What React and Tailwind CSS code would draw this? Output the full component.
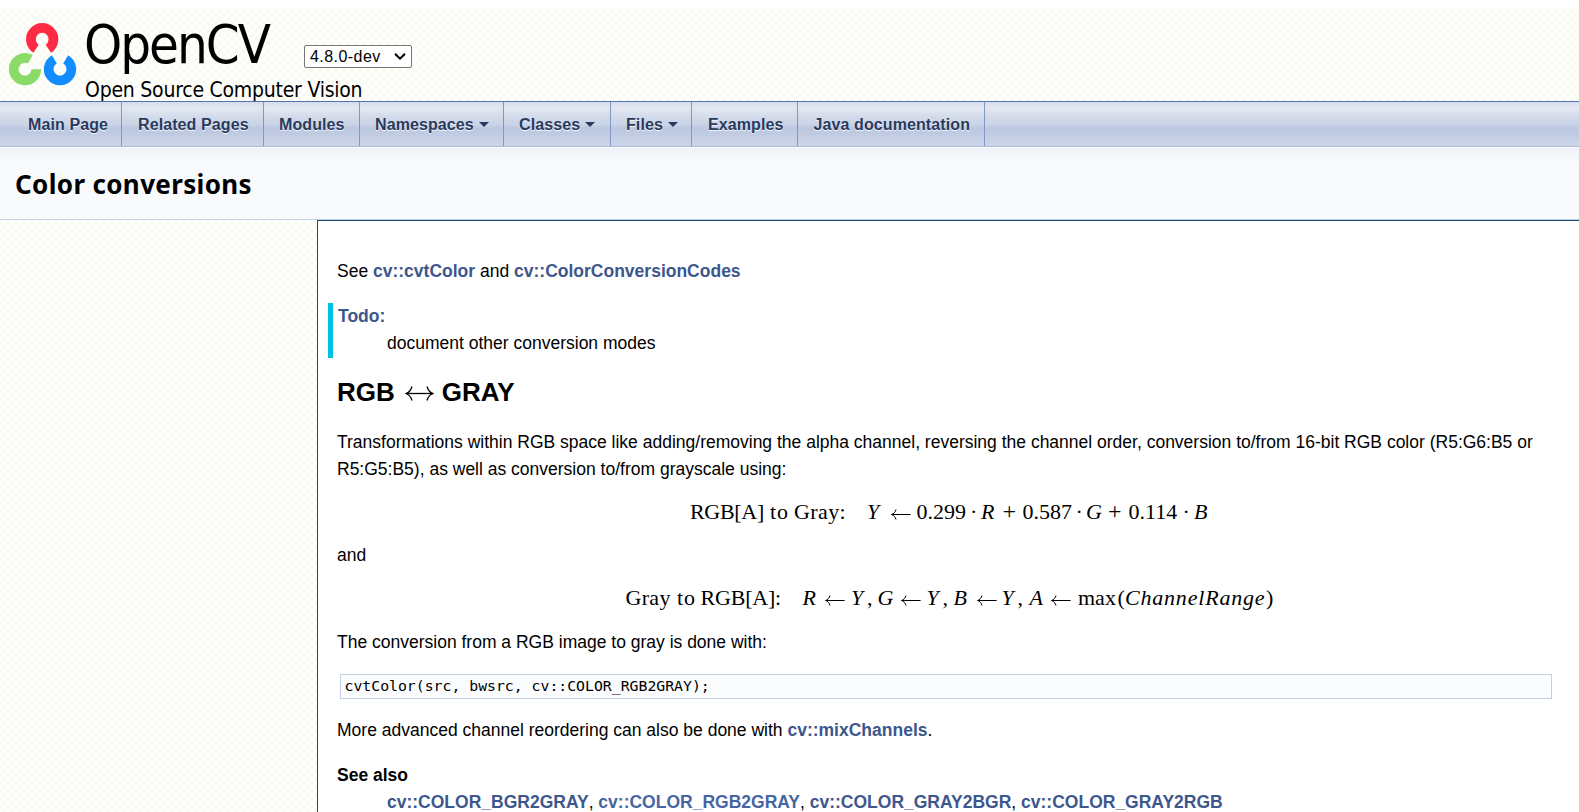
import React from 'react';

const NAV = [
  { label: 'Main Page', box: 'w-[122px] pl-7' },
  { label: 'Related Pages', box: 'w-[142px] pl-4' },
  { label: 'Modules', box: 'w-[96px] pl-[15px]' },
  { label: 'Namespaces', box: 'w-[144px] pl-[15px]', caret: true },
  { label: 'Classes', box: 'w-[107px] pl-[15px]', caret: true },
  { label: 'Files', box: 'w-[81px] pl-[15px]', caret: true },
  { label: 'Examples', box: 'w-[106px] pl-4' },
  { label: 'Java documentation', box: 'w-[187px] pl-[15.5px]' },
];

function Logo() {
  return (
    <svg className="block h-[64px] w-[68px]" viewBox="0 0 68 64" fill="none" strokeWidth="9.7">
      <path d="M27.05 25.7 A11.3 11.3 0 1 1 39.35 25.7" stroke="#ff2a44" />
      <path d="M21.3 36.2 A11.3 11.3 0 1 0 27.3 46.2" stroke="#8cdb68" />
      <path d="M45.35 36.4 A11.3 11.3 0 1 0 56.65 36.4" stroke="#128dff" />
    </svg>
  );
}

function Arrow({ box }) {
  return (
    <span className={`inline-block shrink-0 ${box}`}>
      <svg className="inline-block h-3 w-5 align-[-1px]" viewBox="0 0 20 12" fill="none" stroke="#000">
        <path d="M0.6 6.5 H19.6" strokeWidth="1" />
        <path d="M5 1.5 C4.3 4.1 2.8 5.7 0.6 6.5 C2.8 7.3 4.3 8.9 5 11.5" strokeWidth="1" />
      </svg>
    </span>
  );
}

function T({ box, children }) {
  return <span className={`inline-block shrink-0 whitespace-pre ${box}`}>{children}</span>;
}

function Ref({ children, cls }) {
  return <a className={`font-bold ${cls || 'text-[#3d578c]'}`}>{children}</a>;
}

export default function App() {
  return (
    <div className="flex h-[812px] w-[1579px] flex-col overflow-hidden bg-white font-['Liberation_Sans',Arial,sans-serif] text-[17.5px] leading-[27px] text-black">
      <div className="h-[7px] shrink-0 bg-white" />
      <div className="flex min-h-0 flex-1 flex-col bg-[#fffffd] bg-[radial-gradient(circle,#f7f8ef_0_1px,transparent_3px),radial-gradient(circle,#f8f9f1_0_1px,transparent_3px)] bg-size-[8px_8px] bg-position-[0_0,4px_4px]">
        <header className="flex h-[94px] shrink-0 pl-[9px] pt-4">
          <Logo />
          <div className="-mt-px ml-2 flex flex-col font-['DejaVu_Sans_Condensed','DejaVu_Sans',sans-serif] [font-stretch:condensed]">
            <div className="flex h-[57px] items-start">
              <div className="-ml-px w-[220px] whitespace-nowrap text-[54px] leading-[46px] tracking-[-2px]">OpenCV</div>
              <div className="mt-[23px] flex h-[23px] w-[108px] items-center justify-between rounded-[2px] border border-[#767676] bg-white pl-[5px] pr-[5px] font-['Liberation_Sans',sans-serif] text-[16px] leading-5 tracking-[0.45px]">
                <span>4.8.0-dev</span>
                <svg className="h-[7px] w-[12px]" viewBox="0 0 12 7" fill="none" stroke="#000" strokeWidth="2">
                  <path d="M1 0.8 L6 5.6 L11 0.8" />
                </svg>
              </div>
            </div>
            <div className="whitespace-nowrap text-[21px] leading-[22px] tracking-[-0.23px]">Open Source Computer Vision</div>
          </div>
        </header>
        <nav className="flex h-[46px] shrink-0 border-y border-t-[#5373b4] border-b-[#a9b6d6] bg-[linear-gradient(180deg,#d5dcea_0,#e4e8f2_6px,#d3dbea_15px,#c9d3e7_23px,#bcc8e0_26px,#bfcae2_31px,#cdd6e9_44px)]">
          {NAV.map((n) => (
            <div
              key={n.label}
              className={`flex h-[44px] shrink-0 items-center border-r border-[#8297c6] text-[16px] font-bold text-[#283a5d] [text-shadow:0_1px_1px_rgba(255,255,255,0.9)] ${n.box}`}
            >
              <span className="whitespace-nowrap tracking-[0.1px]">{n.label}</span>
              {n.caret && (
                <svg className="ml-[5px] h-[5px] w-[10px]" viewBox="0 0 10 5">
                  <path d="M0 0 H10 L5 5 Z" fill="#283a5d" />
                </svg>
              )}
            </div>
          ))}
        </nav>
        <div className="flex h-[73px] shrink-0 items-center border-b border-t border-b-[#c4cfe5] border-t-white bg-[linear-gradient(180deg,#edf0f7_0,#f9fafc_14px)] pl-[15px] pt-[2px] font-['Noto_Sans',sans-serif] text-[26px] font-bold tracking-[0.36px]">
          <h1 className="whitespace-nowrap">Color conversions</h1>
        </div>
        <div className="flex min-h-0 flex-1">
          <aside className="w-[317px] shrink-0" />
          <main className="min-w-0 flex-1 overflow-hidden border-l border-t border-[#164b73] bg-white">
            <p className="ml-[19px] mt-[37px]">
              See <Ref>cv::cvtColor</Ref> and <Ref>cv::ColorConversionCodes</Ref>
            </p>
            <dl className="ml-[10px] mt-[18px] border-l-[5px] border-[#00c0e0] pb-px pl-[5px]">
              <dt><Ref>Todo:</Ref></dt>
              <dd className="ml-[49px]">document other conversion modes</dd>
            </dl>
            <h2 className="ml-[19px] mt-[18px] flex h-8 items-center text-[26px] font-bold">
              <span>RGB</span>
              <svg className="ml-[10px] mr-2 mt-[3px] h-[18px] w-[29px]" viewBox="0 0 29 18" fill="none" stroke="#000" strokeWidth="1.3">
                <path d="M1 8.5 H28" />
                <path d="M7 1.5 C6 5 4 7.5 1 8.5 C4 9.5 6 12 7 15.5" />
                <path d="M22 1.5 C23 5 25 7.5 28 8.5 C25 9.5 23 12 22 15.5" />
              </svg>
              <span>GRAY</span>
            </h2>
            <p className="ml-[19px] mt-[21px] whitespace-nowrap">
              Transformations within RGB space like adding/removing the alpha channel, reversing the channel order, conversion to/from 16-bit RGB color (R5:G6:B5 or
              <br />
              R5:G5:B5), as well as conversion to/from grayscale using:
            </p>
            <div className="ml-[372px] mt-[15px] flex font-['Liberation_Serif',serif] text-[22px]">
              <T box="w-[80px] tracking-[-0.3px]">RGB[A]</T>
              <T box="w-[24px] tracking-[0.8px]">to</T>
              <T box="w-[73px] tracking-[0.4px]">Gray:</T>
              <T box="w-[23.5px] italic">Y</T>
              <Arrow box="w-[26px]" />
              <T box="w-[53.5px]">0.299</T>
              <T box="w-[11px]">·</T>
              <T box="w-[21.5px] italic">R</T>
              <T box="w-[20px] text-[24px]">+</T>
              <T box="w-[53px]">0.587</T>
              <T box="w-[10.5px]">·</T>
              <T box="w-[22px] italic">G</T>
              <T box="w-[20.5px] text-[24px]">+</T>
              <T box="w-[54px]">0.114</T>
              <T box="w-[11.5px]">·</T>
              <T box="w-[21px] italic">B</T>
            </div>
            <p className="ml-[19px] mt-[17px]">and</p>
            <div className="ml-[307.5px] mt-[15px] flex font-['Liberation_Serif',serif] text-[22px]">
              <T box="w-[51.5px] tracking-[0.3px]">Gray</T>
              <T box="w-[23.5px] tracking-[0.8px]">to</T>
              <T box="w-[102px] tracking-[-0.2px]">RGB[A]:</T>
              <T box="w-[22.5px] italic">R</T>
              <Arrow box="w-[26px]" />
              <T box="w-[16px] italic">Y</T>
              <T box="w-[10.5px]">,</T>
              <T box="w-[23px] italic">G</T>
              <Arrow box="w-[26px]" />
              <T box="w-[16px] italic">Y</T>
              <T box="w-[11px]">,</T>
              <T box="w-[23px] italic">B</T>
              <Arrow box="w-[25px]" />
              <T box="w-[16px] italic">Y</T>
              <T box="w-[12px]">,</T>
              <T box="w-[21.5px] italic">A</T>
              <Arrow box="w-[27px]" />
              <T box="w-[39.5px]">max</T>
              <T box="w-[7.5px]">(</T>
              <T box="w-[141px] italic tracking-[0.8px]">ChannelRange</T>
              <T box="w-[8px]">)</T>
            </div>
            <p className="ml-[19px] mt-[18px]">The conversion from a RGB image to gray is done with:</p>
            <div className="ml-[22px] mr-[27px] mt-[18px] flex h-[25px] items-center border border-[#c4cfe5] bg-[#fbfcfd] pb-[2px] pl-[3.5px] font-['DejaVu_Sans_Mono',monospace] text-[14.8px]">
              <pre className="font-[inherit]">cvtColor(src, bwsrc, cv::COLOR_RGB2GRAY);</pre>
            </div>
            <p className="ml-[19px] mt-[18px]">
              More advanced channel reordering can also be done with <Ref>cv::mixChannels</Ref>.
            </p>
            <dl className="ml-[19px] mt-[18px]">
              <dt className="font-bold">See also</dt>
              <dd className="ml-[50px] whitespace-nowrap">
                <Ref>cv::COLOR_BGR2GRAY</Ref>, <Ref cls="text-[#4665a2]">cv::COLOR_RGB2GRAY</Ref>, <Ref>cv::COLOR_GRAY2BGR</Ref>, <Ref>cv::COLOR_GRAY2RGB</Ref>
              </dd>
            </dl>
          </main>
        </div>
      </div>
    </div>
  );
}
